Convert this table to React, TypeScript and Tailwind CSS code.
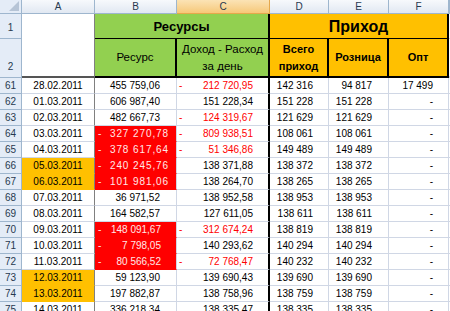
type Row = {
  n: number;
  date: string;
  dateHi?: boolean;
  res: string;
  resNeg?: boolean;
  wide?: boolean;
  diff: string;
  diffNeg?: boolean;
  total: string;
  retail: string;
  opt: string;
};

const rows: Row[] = [
  { n: 61, date: "28.02.2011", res: "455 759,06", diff: "212 720,95", diffNeg: true, total: "142 316", retail: "94 817", opt: "17 499" },
  { n: 62, date: "01.03.2011", res: "606 987,40", diff: "151 228,34", total: "151 228", retail: "151 228", opt: "-" },
  { n: 63, date: "02.03.2011", res: "482 667,73", diff: "124 319,67", diffNeg: true, total: "121 629", retail: "121 629", opt: "-" },
  { n: 64, date: "03.03.2011", res: "327 270,78", resNeg: true, wide: true, diff: "809 938,51", diffNeg: true, total: "108 061", retail: "108 061", opt: "-" },
  { n: 65, date: "04.03.2011", res: "378 617,64", resNeg: true, wide: true, diff: "51 346,86", diffNeg: true, total: "149 489", retail: "149 489", opt: "-" },
  { n: 66, date: "05.03.2011", dateHi: true, res: "240 245,76", resNeg: true, wide: true, diff: "138 371,88", total: "138 372", retail: "138 372", opt: "-" },
  { n: 67, date: "06.03.2011", dateHi: true, res: "101 981,06", resNeg: true, wide: true, diff: "138 264,70", total: "138 265", retail: "138 265", opt: "-" },
  { n: 68, date: "07.03.2011", res: "36 971,52", diff: "138 952,58", total: "138 953", retail: "138 953", opt: "-" },
  { n: 69, date: "08.03.2011", res: "164 582,57", diff: "127 611,05", total: "138 611", retail: "138 611", opt: "-" },
  { n: 70, date: "09.03.2011", res: "148 091,67", resNeg: true, diff: "312 674,24", diffNeg: true, total: "138 819", retail: "138 819", opt: "-" },
  { n: 71, date: "10.03.2011", res: "7 798,05", resNeg: true, diff: "140 293,62", total: "140 294", retail: "140 294", opt: "-" },
  { n: 72, date: "11.03.2011", res: "80 566,52", resNeg: true, diff: "72 768,47", diffNeg: true, total: "140 232", retail: "140 232", opt: "-" },
  { n: 73, date: "12.03.2011", dateHi: true, res: "59 123,90", diff: "139 690,43", total: "139 690", retail: "139 690", opt: "-" },
  { n: 74, date: "13.03.2011", dateHi: true, res: "197 882,87", diff: "138 758,96", total: "138 759", retail: "138 759", opt: "-" },
  { n: 75, date: "14.03.2011", res: "336 218,34", diff: "138 335,47", total: "138 335", retail: "138 335", opt: "-" },
];

const colHead =
  "flex items-center justify-center border-r border-b border-[#9eb6ce] bg-gradient-to-b from-[#f7f9fc] to-[#e1e8f2] text-[10px] text-[#27394f]";

export default function App() {
  return (
    <div
      className="w-[450px] h-[311px] overflow-hidden bg-white"
      style={{ fontFamily: '"Liberation Sans", Arial, sans-serif' }}
    >
      <div className="grid grid-cols-[22px_73px_82px_93px_59px_60px_60px_1fr] grid-rows-[14px_25px_39px_repeat(15,16px)] text-[10px] text-black">
        {/* column headers */}
        <div className="relative border-r border-b border-[#9eb6ce] bg-[#e4ecf7]">
          <svg className="absolute right-[2px] bottom-[2px]" width="10" height="10" viewBox="0 0 10 10">
            <polygon points="10,0 10,10 0,10" fill="#b6c4d6" />
          </svg>
        </div>
        <div className={colHead}>A</div>
        <div className={colHead}>B</div>
        <div className="flex items-center justify-center border-r border-b border-[#e5a84c] bg-gradient-to-b from-[#fbe3b5] to-[#f6c878] text-[10px] text-[#27394f]">
          C
        </div>
        <div className={colHead}>D</div>
        <div className={colHead}>E</div>
        <div className={colHead}>F</div>
        <div className={colHead}></div>

        {/* row 1 */}
        <div className="flex items-end justify-center pb-[3px] border-r border-b border-[#9eb6ce] bg-[#e4ecf7] text-[#27394f]">1</div>
        <div className="row-span-2 bg-white border-r border-r-[#808080] border-b-2 border-b-[#555]"></div>
        <div className="col-span-2 flex items-center justify-center pt-[2px] bg-[#92d050] border-r-2 border-b border-black text-[13px] font-bold">
          Ресурсы
        </div>
        <div className="col-span-3 flex items-center justify-center pt-[2px] bg-[#ffc000] border-r-2 border-b border-black text-[16px] font-bold">
          Приход
        </div>
        <div className="border-b border-[#d0d7e5]"></div>

        {/* row 2 */}
        <div className="flex items-end justify-center pb-[3px] border-r border-b border-[#9eb6ce] bg-[#e4ecf7] text-[#27394f]">2</div>
        <div className="flex items-center justify-center bg-[#92d050] border-r-2 border-b-2 border-black text-[11.5px]">
          Ресурс
        </div>
        <div className="flex items-center justify-center text-center bg-[#92d050] border-r-2 border-b-2 border-black text-[11.5px] leading-[17px]">
          Доход - Расход
          <br />
          за день
        </div>
        <div className="flex items-center justify-center text-center bg-[#ffc000] border-r-2 border-b-2 border-black text-[11px] font-bold leading-[17px]">
          Всего
          <br />
          приход
        </div>
        <div className="flex items-center justify-center bg-[#ffc000] border-r-2 border-b-2 border-black text-[11px] font-bold">
          Розница
        </div>
        <div className="flex items-center justify-center bg-[#ffc000] border-r-2 border-b-2 border-black text-[11px] font-bold">
          Опт
        </div>
        <div className="border-b-2 border-[#d0d7e5]"></div>

        {/* data */}
        {rows.map((r) => (
          <div key={r.n} className="contents">
            <div className="flex items-center justify-center border-r border-b border-[#9eb6ce] bg-[#e4ecf7] text-[#27394f]">
              {r.n}
            </div>
            <div
              className={`flex items-center justify-center border-r border-b border-r-[#808080] ${
                r.dateHi ? "bg-[#ffc000] border-b-[#ffc000]" : "bg-white border-b-[#d0d7e5]"
              }`}
            >
              {r.date}
            </div>
            {r.resNeg ? (
              <div className="flex items-center justify-between pl-[3px] bg-[#ff0000] border-r border-b border-r-[#d0d7e5] border-b-[#ff0000] text-[#ffe8e8]">
                <span>-</span>
                <span className={r.wide ? "pr-[7px] tracking-[0.9px]" : "pr-[15px]"}>{r.res}</span>
              </div>
            ) : (
              <div className="flex items-center justify-end pr-[16px] border-r border-b border-[#d0d7e5]">{r.res}</div>
            )}
            {r.diffNeg ? (
              <div className="flex items-center justify-between pl-[2px] pr-[15px] border-r-2 border-b border-r-black border-b-[#d0d7e5] text-[#ff0000]">
                <span>-</span>
                <span>{r.diff}</span>
              </div>
            ) : (
              <div className="flex items-center justify-end pr-[15px] border-r-2 border-b border-r-black border-b-[#d0d7e5]">{r.diff}</div>
            )}
            <div className="flex items-center justify-end pr-[15px] border-r border-b border-[#d0d7e5]">{r.total}</div>
            <div className="flex items-center justify-end pr-[16px] border-r border-b border-[#d0d7e5]">{r.retail}</div>
            <div className="flex items-center justify-end pr-[15px] border-r border-b border-[#d0d7e5]">{r.opt}</div>
            <div className="border-b border-[#d0d7e5]"></div>
          </div>
        ))}
      </div>
    </div>
  );
}
